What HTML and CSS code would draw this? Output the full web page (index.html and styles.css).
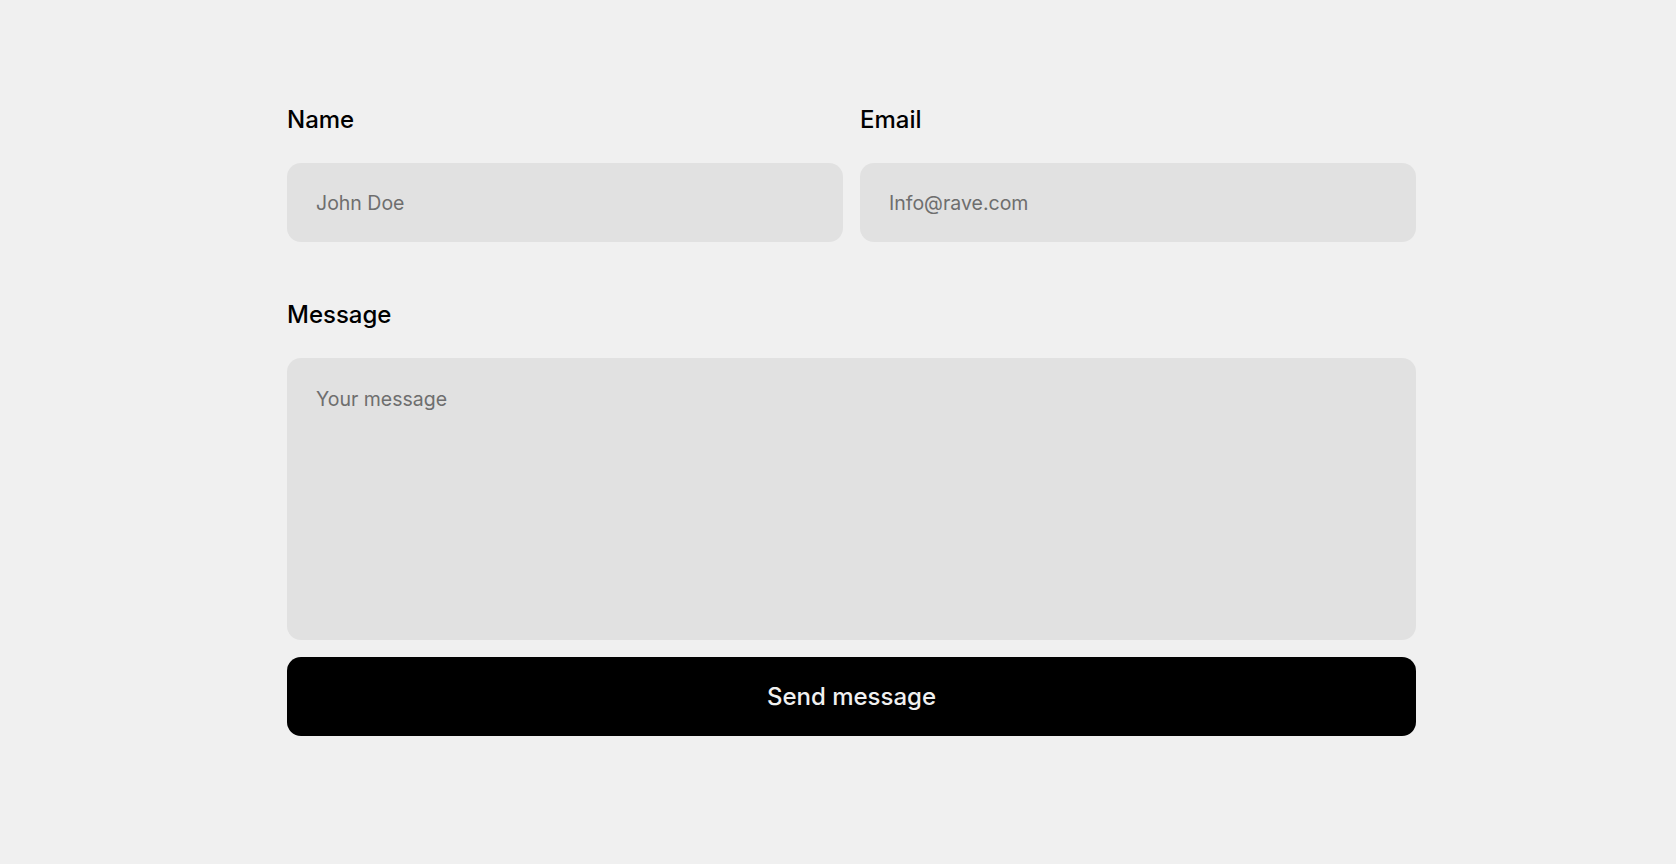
FILE: index.html
```html
<!DOCTYPE html>
<html lang="en">
<head>
<meta charset="utf-8">
<title>Contact</title>
<link rel="stylesheet" href="styles.css">
</head>
<body>
  <main class="page">
    <form class="contact-form">
      <div class="row">
        <div class="field">
          <label class="field-label" for="name">Name</label>
          <input class="field-input" id="name" type="text" placeholder="John Doe">
        </div>
        <div class="field">
          <label class="field-label" for="email">Email</label>
          <input class="field-input" id="email" type="email" placeholder="Info@rave.com">
        </div>
      </div>
      <div class="field field-wide">
        <label class="field-label" for="message">Message</label>
        <textarea class="field-input field-area" id="message" placeholder="Your message"></textarea>
      </div>
      <button class="submit" type="button">Send message</button>
    </form>
  </main>
</body>
</html>
```

FILE: styles.css
```css
* {
  box-sizing: border-box;
}

html,
body {
  margin: 0;
  background: #f0f0f0;
}

body {
  font-family: Inter, "Noto Sans", "Liberation Sans", sans-serif;
  color: #000;
}

.page {
  padding: 105px 0 0 287px;
}

.contact-form {
  width: 1129px;
  display: flex;
  flex-direction: column;
}

.row {
  display: grid;
  grid-template-columns: 1fr 1fr;
  column-gap: 17px;
}

.field {
  display: flex;
  flex-direction: column;
  gap: 29px;
}

.field-wide {
  margin-top: 58px;
}

.field-label {
  font-size: 24px;
  font-weight: 500;
  line-height: 29px;
}

.field-input {
  display: block;
  width: 100%;
  height: 79px;
  padding: 0 29px;
  border: none;
  outline: none;
  border-radius: 14px;
  background: #e1e1e1;
  font-family: inherit;
  font-size: 19.5px;
  color: #000;
}

.field-input::placeholder {
  color: #6e6e6e;
  opacity: 1;
}

.field-area {
  height: 282px;
  padding: 29px 29px;
  resize: none;
  line-height: normal;
}

.submit {
  margin-top: 17px;
  height: 79px;
  width: 100%;
  border: none;
  border-radius: 14px;
  background: #000;
  color: #f0f0f0;
  font-family: inherit;
  font-size: 24px;
  font-weight: 500;
  cursor: pointer;
}
```
